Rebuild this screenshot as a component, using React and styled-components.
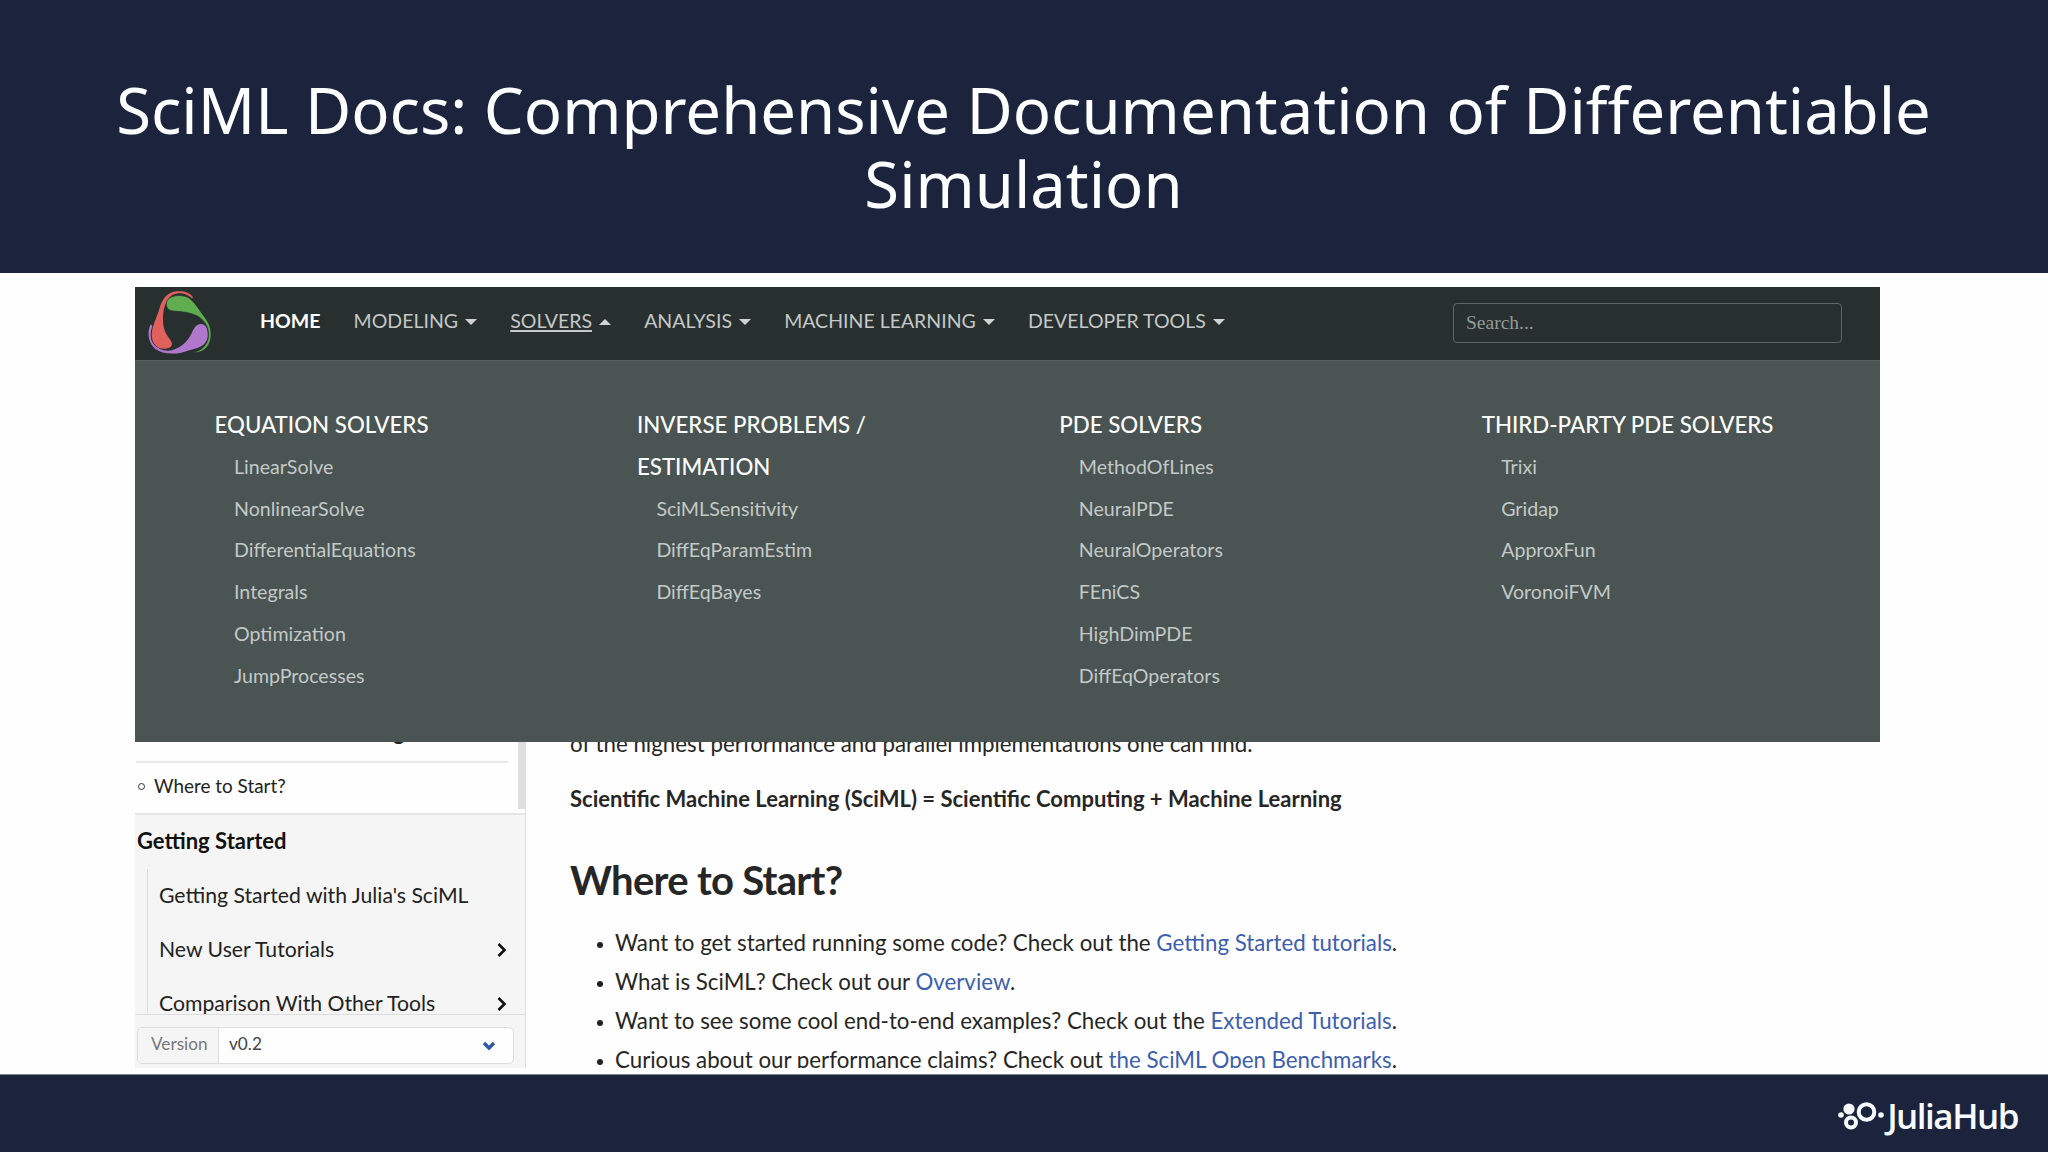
import styled, { createGlobalStyle } from "styled-components";

const GlobalStyle = createGlobalStyle`
  * {
    box-sizing: border-box;
  }
  body {
    margin: 0;
    background: #ffffff;
    font-family: Lato, "Liberation Sans", sans-serif;
  }
`;

const Slide = styled.div`
  width: 2048px;
  height: 1152px;
  display: flex;
  flex-direction: column;
  overflow: hidden;
  background: #fefefe;
`;

const TitleBar = styled.header`
  height: 273px;
  flex: none;
  padding-top: 73px;
  background: #1b233d;
`;

const Title = styled.h1`
  margin: 0 1px 0 0;
  color: #fdfeff;
  font-family: "Noto Sans", "Open Sans", sans-serif;
  font-size: 63.4px;
  font-weight: 400;
  line-height: 73.6px;
  text-align: center;
  white-space: nowrap;
`;

const Site = styled.main`
  width: 1745px;
  height: 781px;
  flex: none;
  margin: 14px 0 0 135px;
  display: flex;
  flex-direction: column;
  overflow: hidden;
`;

const Nav = styled.nav`
  height: 74px;
  flex: none;
  display: flex;
  padding-left: 12px;
  background: #282f2f;
  border-bottom: 1px solid #56615f;
`;

const NavLinks = styled.div`
  display: flex;
  gap: 33.2px;
  margin: 14px 0 0 46px;
`;

const NavLink = styled.a`
  display: flex;
  align-items: center;
  gap: 7px;
  height: 40px;
  color: ${props => props.$active ? "#ffffff" : "#c4c8c7"};
  font-size: 19.5px;
  font-weight: ${props => props.$active ? 700 : 400};
  line-height: 40px;
  white-space: nowrap;
  span {
    text-decoration: ${props => props.$open ? "underline" : "none"};
    text-decoration-thickness: 2px;
    text-underline-offset: 2px;
  }
`;

const Caret = styled.i`
  margin-top: 1px;
  border-left: 6px solid transparent;
  border-right: 6px solid transparent;
  border-top: ${props => props.$up ? "none" : "6px solid #d0d4d3"};
  border-bottom: ${props => props.$up ? "6px solid #d0d4d3" : "none"};
`;

const Search = styled.input`
  width: 389px;
  height: 40px;
  margin: 16px 38px 0 auto;
  padding: 0 12px;
  background: transparent;
  border: 1px solid #5d6766;
  border-radius: 4px;
  font-family: "Liberation Serif", serif;
  font-size: 19.5px;
  &::placeholder {
    color: #929998;
  }
`;

const Mega = styled.section`
  height: 381px;
  flex: none;
  display: grid;
  grid-template-columns: repeat(4, 422.4px);
  padding: 43px 0 0 79.5px;
  background: #4a5453;
`;

const MegaHead = styled.h3`
  width: 310px;
  margin: 0;
  color: #fbfdfc;
  font-size: 22.3px;
  font-weight: 500;
  line-height: 41.75px;
  white-space: nowrap;
`;

const MegaLink = styled.a`
  display: block;
  padding-left: 19.5px;
  color: #c3c9c7;
  font-size: 19.6px;
  line-height: 41.8px;
`;

const Page = styled.div`
  flex: 1;
  min-height: 0;
  display: flex;
  overflow: hidden;
`;

const Sidebar = styled.aside`
  width: 391px;
  flex: none;
  display: flex;
  flex-direction: column;
  background: #f5f5f5;
  border-right: 1px solid #e0e0e0;
  color: #222222;
`;

const Current = styled.div`
  height: 73px;
  flex: none;
  position: relative;
  background: #fefefe;
  border-bottom: 2px solid #e6e6e6;
`;

const CurrentTitle = styled.div`
  height: 21px;
  margin: 0 17px 0 1px;
  padding-left: 257px;
  overflow: hidden;
  border-bottom: 2px solid #e8e8e8;
  font-size: 22px;
  font-weight: 700;
  line-height: 0;
  span {
    display: block;
    margin-top: -10px;
  }
`;

const Anchor = styled.div`
  display: flex;
  align-items: center;
  gap: 9px;
  padding: 8px 0 0 3px;
  font-size: 18.9px;
  line-height: 30px;
  i {
    width: 7px;
    height: 7px;
    border: 1px solid #333333;
    border-radius: 50%;
  }
`;

const Thumb = styled.div`
  position: absolute;
  top: 0;
  right: 0;
  width: 7px;
  height: 67px;
  background: #dfdfdf;
`;

const Group = styled.div`
  padding: 9px 0 0 2px;
  color: #111111;
  font-size: 22px;
  font-weight: 700;
  line-height: 33px;
`;

const Tree = styled.div`
  height: 145px;
  margin: 12px 0 0 12px;
  overflow: hidden;
  border-left: 1px solid #dddddd;
`;

const TreeItem = styled.div`
  display: flex;
  align-items: center;
  justify-content: space-between;
  height: 54px;
  padding: 0 18px 0 11px;
  font-size: 21.2px;
  line-height: 28px;
  span {
    padding-bottom: 2px;
  }
`;

const VersionBar = styled.div`
  flex: 1;
  padding: 12px 11px 0 2px;
  border-top: 1px solid #dcdcdc;
`;

const VersionBox = styled.div`
  display: flex;
  align-items: center;
  height: 37px;
  background: #fefefe;
  border: 1px solid #dddddd;
  border-radius: 5px;
  font-size: 17.2px;
  line-height: 31px;
`;

const VersionLabel = styled.span`
  width: 81px;
  height: 35px;
  padding-left: 13px;
  background: #f5f5f5;
  border-right: 1px solid #dddddd;
  border-radius: 5px 0 0 5px;
  color: #777777;
`;

const VersionValue = styled.span`
  flex: 1;
  height: 35px;
  padding-left: 10px;
  color: #444444;
`;

const Article = styled.article`
  padding-left: 44px;
  color: #262626;
  font-size: 22.3px;
  line-height: 33px;
  white-space: nowrap;
`;

const Lead = styled.p`
  margin: ${props => props.$clipped ? "-15px 0 0" : "22px 0 0"};
  font-size: ${props => props.$clipped ? "22.3px" : "22px"};
  font-weight: ${props => props.$clipped ? 400 : 700};
`;

const Heading = styled.h2`
  margin: 41px 0 0;
  font-size: 40px;
  font-weight: 700;
  letter-spacing: -0.7px;
  line-height: 48px;
`;

const List = styled.ul`
  margin: 19px 0 0;
  padding: 0;
  list-style: none;
`;

const Item = styled.li`
  display: flex;
  align-items: center;
  padding-left: 27px;
  line-height: 39px;
  &::before {
    content: "";
    width: 6px;
    height: 6px;
    margin: 4px 12px 0 0;
    border-radius: 50%;
    background: #222222;
  }
  a {
    color: #3d5fae;
  }
`;

const Footer = styled.footer`
  flex: 1;
  margin-top: 6px;
  padding-right: 30px;
  display: flex;
  justify-content: flex-end;
  background: #1b233d;
  border-top: 1px solid #7d8293;
`;

const Brand = styled.div`
  display: flex;
  gap: 1px;
  color: #f7fbff;
  font-family: "Open Sans", "Noto Sans", sans-serif;
  font-size: 35px;
  font-weight: 600;
  letter-spacing: -1.5px;
  line-height: 50px;
  padding-top: 16px;
`;

const menus = [
  { label: "MODELING" },
  { label: "SOLVERS", open: true },
  { label: "ANALYSIS" },
  { label: "MACHINE LEARNING" },
  { label: "DEVELOPER TOOLS" },
];

const columns = [
  {
    title: "EQUATION SOLVERS",
    links: ["LinearSolve", "NonlinearSolve", "DifferentialEquations", "Integrals", "Optimization", "JumpProcesses"],
  },
  {
    title: <>INVERSE PROBLEMS /<br />ESTIMATION</>,
    links: ["SciMLSensitivity", "DiffEqParamEstim", "DiffEqBayes"],
  },
  {
    title: "PDE SOLVERS",
    links: ["MethodOfLines", "NeuralPDE", "NeuralOperators", "FEniCS", "HighDimPDE", "DiffEqOperators"],
  },
  {
    title: "THIRD-PARTY PDE SOLVERS",
    links: ["Trixi", "Gridap", "ApproxFun", "VoronoiFVM"],
  },
];

const items = [
  ["Want to get started running some code? Check out the", "Getting Started tutorials"],
  ["What is SciML? Check out our", "Overview"],
  ["Want to see some cool end-to-end examples? Check out the", "Extended Tutorials"],
  ["Curious about our performance claims? Check out", "the SciML Open Benchmarks"],
];

const Logo = styled.svg`
  margin-top: 3px;
`;

const SciMLLogo = () => (
  <Logo width="67" height="67" viewBox="50 30 201 201">
    <path d="M61 133C50 155 52 188 75 207C98 224 140 225 172 212C198 205 226 202 232 172C234 153 229 134 214 132C196 131 190 147 183 161C172 184 154 201 125 211C104 215 82 208 70 193C59 179 59 158 66 138Z" fill="#b078cc" />
    <path d="M188 51C178 37 160 32 139 34C111 36 96 57 87 86C80 113 64 137 64 167C65 192 83 209 106 206C124 204 130 193 120 180C105 161 98 145 98 118C98 87 106 58 126 45C147 35 167 40 186 55Z" fill="#e0605c" />
    <path d="M112 59C126 43 162 43 179 56C196 70 209 93 224 113C239 131 246 158 240 180C235 203 214 221 189 217C214 212 230 195 234 173C238 145 225 124 205 110C183 98 158 95 128 93C106 91 105 70 112 59Z" fill="#60ad50" stroke="#282f2f" strokeWidth="2" />
  </Logo>
);

const Chevron = () => (
  <svg width="10" height="16" viewBox="0 0 10 16">
    <path d="M1.5 2L7.5 8L1.5 14" fill="none" stroke="#111111" strokeWidth="2.6" />
  </svg>
);

const SelectArrow = styled.svg`
  margin-right: 17px;
`;

const Dots = styled.svg`
  margin-top: 7px;
`;

const App = () => {
  return (
    <Slide>
      <GlobalStyle />
      <TitleBar>
        <Title>SciML Docs: Comprehensive Documentation of Differentiable<br />Simulation</Title>
      </TitleBar>
      <Site>
        <Nav>
          <SciMLLogo />
          <NavLinks>
            <NavLink $active>HOME</NavLink>
            {menus.map(menu => (
              <NavLink key={menu.label} $open={menu.open}>
                <span>{menu.label}</span>
                <Caret $up={menu.open} />
              </NavLink>
            ))}
          </NavLinks>
          <Search placeholder="Search..." />
        </Nav>
        <Mega>
          {columns.map((column, i) => (
            <div key={i}>
              <MegaHead>{column.title}</MegaHead>
              {column.links.map(link => <MegaLink key={link}>{link}</MegaLink>)}
            </div>
          ))}
        </Mega>
        <Page>
          <Sidebar>
            <Current>
              <CurrentTitle><span>g</span></CurrentTitle>
              <Anchor><i />Where to Start?</Anchor>
              <Thumb />
            </Current>
            <Group>Getting Started</Group>
            <Tree>
              <TreeItem><span>Getting Started with Julia's SciML</span></TreeItem>
              <TreeItem><span>New User Tutorials</span><Chevron /></TreeItem>
              <TreeItem><span>Comparison With Other Tools</span><Chevron /></TreeItem>
            </Tree>
            <VersionBar>
              <VersionBox>
                <VersionLabel>Version</VersionLabel>
                <VersionValue>v0.2</VersionValue>
                <SelectArrow width="14" height="10" viewBox="0 0 14 10">
                  <path d="M2 2L7 7L12 2" fill="none" stroke="#2f57a8" strokeWidth="3.4" />
                </SelectArrow>
              </VersionBox>
            </VersionBar>
          </Sidebar>
          <Article>
            <Lead $clipped>of the highest performance and parallel implementations one can find.</Lead>
            <Lead>Scientific Machine Learning (SciML) = Scientific Computing + Machine Learning</Lead>
            <Heading>Where to Start?</Heading>
            <List>
              {items.map(([text, link]) => (
                <Item key={link}><span>{text} <a>{link}</a>.</span></Item>
              ))}
            </List>
          </Article>
        </Page>
      </Site>
      <Footer>
        <Brand>
          <Dots width="48" height="34" viewBox="1839 1098 48 34" fill="#f7fbff">
            <circle cx="1842" cy="1115" r="2.8" />
            <circle cx="1850" cy="1109" r="5.6" />
            <circle cx="1852" cy="1122.5" r="5" fill="none" stroke="#f7fbff" strokeWidth="4" />
            <circle cx="1867.5" cy="1112" r="7.8" fill="none" stroke="#f7fbff" strokeWidth="4" />
            <circle cx="1882" cy="1115" r="2.8" />
          </Dots>
          JuliaHub
        </Brand>
      </Footer>
    </Slide>
  );
};

export default App;
